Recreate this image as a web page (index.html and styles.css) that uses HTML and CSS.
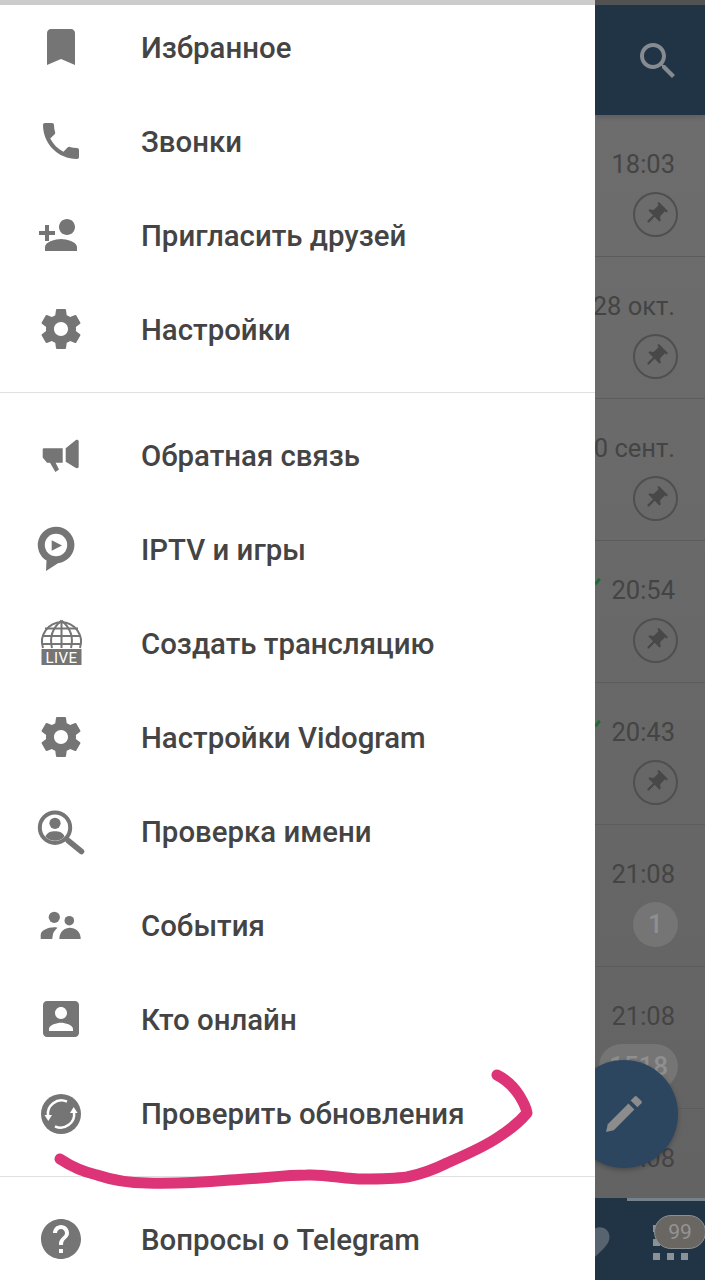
FILE: index.html
```html
<!DOCTYPE html>
<html lang="ru">
<head>
	<meta charset="UTF-8"/>
	<meta name="viewport" content="width=device-width, initial-scale=1.0" />
	<title>Vidogram menu</title>
	<link rel="stylesheet" href="styles.css">
</head>
<body>

<div id="container">

	<div id="drawer">
		<div class="strip"></div>

		<div class="group first">
			<div class="item">
				<svg class="icon" viewBox="0 0 24 24"><path d="M17 3H7c-1.1 0-1.99.9-1.99 2L5 21l7-3 7 3V5c0-1.1-.9-2-2-2z"/></svg>
				<span>Избранное</span>
			</div>
			<div class="item">
				<svg class="icon" viewBox="0 0 24 24"><path d="M6.62 10.79c1.44 2.83 3.76 5.14 6.59 6.59l2.2-2.2c.27-.27.67-.36 1.02-.24 1.12.37 2.33.57 3.57.57.55 0 1 .45 1 1V20c0 .55-.45 1-1 1-9.39 0-17-7.61-17-17 0-.55.45-1 1-1h3.5c.55 0 1 .45 1 1 0 1.25.2 2.45.57 3.57.11.35.03.74-.25 1.02l-2.2 2.2z"/></svg>
				<span>Звонки</span>
			</div>
			<div class="item">
				<svg class="icon" viewBox="0 0 24 24"><path d="M15 12c2.21 0 4-1.79 4-4s-1.79-4-4-4-4 1.79-4 4 1.79 4 4 4zm-9-2V7H4v3H1v2h3v3h2v-3h3v-2H6zm6 4c-2.67 0-8 1.34-8 4v2h16v-2c0-2.66-5.33-4-8-4z"/></svg>
				<span>Пригласить друзей</span>
			</div>
			<div class="item">
				<svg class="icon" viewBox="0 0 24 24"><path d="M19.43 12.98c.04-.32.07-.64.07-.98s-.03-.66-.07-.98l2.11-1.65c.19-.15.24-.42.12-.64l-2-3.46c-.12-.22-.39-.3-.61-.22l-2.49 1c-.52-.4-1.08-.73-1.69-.98l-.38-2.65C14.46 2.18 14.25 2 14 2h-4c-.25 0-.46.18-.49.42l-.38 2.65c-.61.25-1.17.59-1.69.98l-2.49-1c-.23-.09-.49 0-.61.22l-2 3.46c-.13.22-.07.49.12.64l2.11 1.65c-.04.32-.07.65-.07.98s.03.66.07.98l-2.11 1.65c-.19.15-.24.42-.12.64l2 3.46c.12.22.39.3.61.22l2.49-1c.52.4 1.08.73 1.69.98l.38 2.65c.03.24.24.42.49.42h4c.25 0 .46-.18.49-.42l.38-2.65c.61-.25 1.17-.59 1.69-.98l2.49 1c.23.09.49 0 .61-.22l2-3.46c.12-.22.07-.49-.12-.64l-2.11-1.65zM12 15.5c-1.93 0-3.5-1.57-3.5-3.5s1.57-3.5 3.5-3.5 3.5 1.57 3.5 3.5-1.57 3.5-3.5 3.5z"/></svg>
				<span>Настройки</span>
			</div>
		</div>

		<div class="group">
			<div class="item">
				<svg class="icon" viewBox="0 0 48 48"><path d="M6.5 17.3H25.7V31.7H18.6L22 38.6 18.4 41 13 31.7H10L5.7 26.5V18z"/><path d="M28.7 17.3L38.6 9.2c1.4-.8 3.1-.3 3.1 1.3V35.5c0 1.6-1.7 2.1-3.1 1.3L28.7 30.7z"/></svg>
				<span>Обратная связь</span>
			</div>
			<div class="item">
				<svg class="icon" viewBox="0 0 48 48"><path d="M19 1.7a18.3 18.3 0 0 1 2 36.5L9 46 9.5 35.6A18.3 18.3 0 0 1 19 1.7z"/><circle class="knock" cx="19" cy="20" r="11.2"/><path d="M14.7 15.2L25 20.5 14.7 25.8z"/></svg>
				<span>IPTV и игры</span>
			</div>
			<div class="item">
				<svg class="icon" viewBox="0 0 48 48">
					<g class="wire">
						<path d="M6 29A19.5 19.5 0 1 1 43 29"/>
						<path d="M24.5 1.5C13 11 13 21 15 29M24.5 1.5C36 11 36 21 34 29M24.5 1.5V29"/>
						<path d="M8 9.5H41M5 17H44M5 25H44"/>
					</g>
					<rect x="4.5" y="30" width="40" height="16"/>
					<text class="live" x="24.5" y="43.5" text-anchor="middle">LIVE</text>
				</svg>
				<span>Создать трансляцию</span>
			</div>
			<div class="item">
				<svg class="icon" viewBox="0 0 24 24"><path d="M19.43 12.98c.04-.32.07-.64.07-.98s-.03-.66-.07-.98l2.11-1.65c.19-.15.24-.42.12-.64l-2-3.46c-.12-.22-.39-.3-.61-.22l-2.49 1c-.52-.4-1.08-.73-1.69-.98l-.38-2.65C14.46 2.18 14.25 2 14 2h-4c-.25 0-.46.18-.49.42l-.38 2.65c-.61.25-1.17.59-1.69.98l-2.49-1c-.23-.09-.49 0-.61.22l-2 3.46c-.13.22-.07.49.12.64l2.11 1.65c-.04.32-.07.65-.07.98s.03.66.07.98l-2.11 1.65c-.19.15-.24.42-.12.64l2 3.46c.12.22.39.3.61.22l2.49-1c.52.4 1.08.73 1.69.98l.38 2.65c.03.24.24.42.49.42h4c.25 0 .46-.18.49-.42l.38-2.65c.61-.25 1.17-.59 1.69-.98l2.49 1c.23.09.49 0 .61-.22l2-3.46c.12-.22.07-.49-.12-.64l-2.11-1.65zM12 15.5c-1.93 0-3.5-1.57-3.5-3.5s1.57-3.5 3.5-3.5 3.5 1.57 3.5 3.5-1.57 3.5-3.5 3.5z"/></svg>
				<span>Настройки Vidogram</span>
			</div>
			<div class="item">
				<svg class="icon" viewBox="0 0 48 48">
					<circle class="ring" cx="18" cy="20.7" r="15.2"/>
					<path class="handle" d="M31 33.5L44.5 44.5"/>
					<circle cx="18" cy="16.3" r="5.6"/>
					<path d="M8.5 29.5C10 25.5 14 24.3 18 24.3s8 1.2 9.5 5.2C25 32.5 21.5 33.7 18 33.7s-7-1.2-9.5-4.2z"/>
				</svg>
				<span>Проверка имени</span>
			</div>
			<div class="item">
				<svg class="icon" viewBox="0 0 48 48">
					<circle cx="17.3" cy="16.3" r="5.6"/>
					<circle cx="32.3" cy="19.7" r="4.8"/>
					<path d="M3.7 38V34C3.7 29.5 11 26.3 17 26.3c1.3 0 2.5.1 3.5.4C18 29 16.5 31 16 33l-.8 5z"/>
					<path d="M22.3 38C22.3 30 28 26.7 33 26.7S43.7 30 43.7 38z"/>
				</svg>
				<span>События</span>
			</div>
			<div class="item">
				<svg class="icon" viewBox="0 0 24 24"><path d="M3 5v14c0 1.1.89 2 2 2h14c1.1 0 2-.9 2-2V5c0-1.1-.9-2-2-2H5c-1.11 0-2 .9-2 2zm12 4c0 1.66-1.34 3-3 3s-3-1.34-3-3 1.34-3 3-3 3 1.34 3 3zm-9 8c0-2 4-3.1 6-3.1s6 1.1 6 3.1v1H6v-1z"/></svg>
				<span>Кто онлайн</span>
			</div>
			<div class="item">
				<svg class="icon" viewBox="0 0 48 48">
					<circle cx="24" cy="25" r="20"/>
					<path class="arrow" d="M30 12.7A13.5 13.5 0 0 0 11 27"/>
					<path class="arrow" d="M18 37.3A13.5 13.5 0 0 0 37 23"/>
					<path class="knock" d="M7.5 26L15 26 11.300 32z"/>
					<path class="knock" d="M33 24L40.500 24 36.700 18z"/>
				</svg>
				<span>Проверить обновления</span>
			</div>
		</div>

		<div class="group last">
			<div class="item">
				<svg class="icon" viewBox="0 0 24 24"><path d="M12 2C6.48 2 2 6.48 2 12s4.48 10 10 10 10-4.48 10-10S17.52 2 12 2zm1 17h-2v-2h2v2zm2.07-7.75l-.9.92C13.45 12.9 13 13.5 13 15h-2v-.5c0-1.1.45-2.1 1.17-2.83l1.24-1.26c.37-.36.59-.86.59-1.41 0-1.1-.9-2-2-2s-2 .9-2 2H8c0-2.21 1.79-4 4-4s4 1.79 4 4c0 .88-.36 1.68-.93 2.25z"/></svg>
				<span>Вопросы о Telegram</span>
			</div>
		</div>
	</div>

	<div id="chats">
		<div class="head">
			<svg class="search" viewBox="0 0 24 24"><path d="M15.5 14h-.79l-.28-.27C15.41 12.59 16 11.11 16 9.5 16 5.91 13.09 3 9.5 3S3 5.91 3 9.5 5.91 16 9.5 16c1.61 0 3.09-.59 4.23-1.57l.27.28v.79l5 4.99L20.49 19l-4.99-5zm-6 0C7.01 14 5 11.99 5 9.5S7.01 5 9.5 5 14 7.01 14 9.5 11.99 14 9.5 14z"/></svg>
		</div>

		<div class="rows">
			<div class="row">
				<div class="time">18:03</div>
				<div class="pin"><svg viewBox="0 0 24 24"><path d="M16 9V4h1c.55 0 1-.45 1-1s-.45-1-1-1H7c-.55 0-1 .45-1 1s.45 1 1 1h1v5c0 1.66-1.34 3-3 3v2h5.97v7l1 1 1-1v-7H19v-2c-1.66 0-3-1.34-3-3z"/></svg></div>
			</div>
			<div class="row">
				<div class="time">28 окт.</div>
				<div class="pin"><svg viewBox="0 0 24 24"><path d="M16 9V4h1c.55 0 1-.45 1-1s-.45-1-1-1H7c-.55 0-1 .45-1 1s.45 1 1 1h1v5c0 1.66-1.34 3-3 3v2h5.97v7l1 1 1-1v-7H19v-2c-1.66 0-3-1.34-3-3z"/></svg></div>
			</div>
			<div class="row">
				<div class="time">30 сент.</div>
				<div class="pin"><svg viewBox="0 0 24 24"><path d="M16 9V4h1c.55 0 1-.45 1-1s-.45-1-1-1H7c-.55 0-1 .45-1 1s.45 1 1 1h1v5c0 1.66-1.34 3-3 3v2h5.97v7l1 1 1-1v-7H19v-2c-1.66 0-3-1.34-3-3z"/></svg></div>
			</div>
			<div class="row">
				<div class="time"><i class="tick"></i>20:54</div>
				<div class="pin"><svg viewBox="0 0 24 24"><path d="M16 9V4h1c.55 0 1-.45 1-1s-.45-1-1-1H7c-.55 0-1 .45-1 1s.45 1 1 1h1v5c0 1.66-1.34 3-3 3v2h5.97v7l1 1 1-1v-7H19v-2c-1.66 0-3-1.34-3-3z"/></svg></div>
			</div>
			<div class="row">
				<div class="time"><i class="tick"></i>20:43</div>
				<div class="pin"><svg viewBox="0 0 24 24"><path d="M16 9V4h1c.55 0 1-.45 1-1s-.45-1-1-1H7c-.55 0-1 .45-1 1s.45 1 1 1h1v5c0 1.66-1.34 3-3 3v2h5.97v7l1 1 1-1v-7H19v-2c-1.66 0-3-1.34-3-3z"/></svg></div>
			</div>
			<div class="row">
				<div class="time">21:08</div>
				<div class="count">1</div>
			</div>
			<div class="row">
				<div class="time">21:08</div>
				<div class="count wide">1518</div>
			</div>
			<div class="row end">
				<div class="time">21:08</div>
			</div>
		</div>

		<div class="tabs">
			<div class="indicator"></div>
			<div class="tabicons">
				<svg class="heart" viewBox="0 0 24 24"><path d="M12 21.35l-1.45-1.32C5.4 15.36 2 12.28 2 8.5 2 5.42 4.42 3 7.5 3c1.74 0 3.41.81 4.5 2.09C13.09 3.81 14.76 3 16.5 3 19.58 3 22 5.42 22 8.5c0 3.78-3.4 6.86-8.55 11.54L12 21.35z"/></svg>
				<div class="apps">
					<i></i><i></i><i></i><i></i><i></i><i></i><i></i><i></i><i></i>
					<div class="tabbadge">99</div>
				</div>
			</div>
		</div>

		<div class="fab">
			<svg viewBox="0 0 24 24"><path d="M3 21l.9-3.9L14.2 6.8l3 3L6.9 20.1z"/><path d="M15.3 5.2l2-2a.8.8 0 0 1 1.1 0l2.3 2.3a.8.8 0 0 1 0 1.1l-2 2z"/></svg>
		</div>
	</div>

	<!-- marker stroke drawn on top of the screenshot -->
	<svg id="ink" viewBox="0 0 705 1280"><path d="M60 1159C72 1167 84 1172 97 1175 112 1180 130 1183 147 1183 175 1184 205 1182 230 1180 258 1179 283 1175 307 1175 325 1174 345 1179 363 1179 378 1179 393 1179 407 1177 422 1174 435 1169 447 1163 465 1155 482 1148 497 1138 508 1131 518 1124 527 1113 526 1106 522 1100 519 1095 513 1086 507 1080 497 1075"/></svg>
</div>

</body>
</html>
```

FILE: styles.css
```css
html {
	font-family: Roboto, "Noto Sans", sans-serif;
}
body {
	margin: 0;
	padding: 0;
}
#container {
	position: relative;
	display: flex;
	width: 705px;
	height: 1280px;
	overflow: hidden;
}

/* left drawer */
#drawer {
	width: 595px;
	flex: none;
	background-color: #fff;
	position: relative;
}
.strip {
	height: 5px;
	background-color: #ccc;
}
.group {
	padding: 16px 0 15px;
	border-bottom: 1px solid #e0e0e0;
}
.group.first {
	margin-top: -4px;
	padding-top: 0;
}
.group.last {
	border-bottom: 0;
}
.item {
	display: flex;
	align-items: center;
	height: 94px;
	padding-left: 37px;
	font-size: 29.4px;
	font-weight: 500;
	color: #444;
	white-space: nowrap;
}
.icon {
	width: 48px;
	height: 48px;
	flex: none;
	margin: -2px 56px 0 0;
	fill: #757575;
}
.knock {
	fill: #fff;
}
.wire {
	fill: none;
	stroke: #757575;
	stroke-width: 2;
}
.live {
	font-family: Roboto, sans-serif;
	font-size: 15px;
	font-weight: 400;
	letter-spacing: .5px;
	fill: #fff;
}
.ring {
	fill: none;
	stroke: #757575;
	stroke-width: 4;
}
.handle {
	fill: none;
	stroke: #757575;
	stroke-width: 5.5;
	stroke-linecap: round;
}
.arrow {
	fill: none;
	stroke: #fff;
	stroke-width: 2.5;
}

/* dimmed chat list */
#chats {
	position: relative;
	flex: 1;
	min-width: 0;
	display: flex;
	flex-direction: column;
	overflow: hidden;
	background: linear-gradient(#6e6e6e, #626262);
}
.head {
	height: 110px;
	flex: none;
	border-top: 5px solid #525252;
	background-color: #213446;
	box-shadow: 0 3px 4px rgba(0 0 0 / .12);
	position: relative;
}
.search {
	display: block;
	width: 48px;
	height: 48px;
	margin: 32px 0 0 39px;
	fill: #858b90;
}
.rows {
	flex: 1;
}
.row {
	box-sizing: border-box;
	height: 142px;
	padding: 34px 27px 0 0;
	display: flex;
	flex-direction: column;
	align-items: flex-end;
	border-bottom: 1px solid #5c5c5c;
}
.row.end {
	height: 89px;
	border-bottom: 0;
}
.time {
	display: flex;
	align-items: center;
	height: 30px;
	margin-right: 3px;
	font-size: 25.5px;
	line-height: 30px;
	color: #444;
	white-space: nowrap;
}
.tick {
	width: 7px;
	height: 3px;
	margin: -17px 10px 0 0;
	background-color: #1f6a35;
	transform: rotate(-50deg);
}
.pin {
	box-sizing: border-box;
	width: 45px;
	height: 45px;
	margin-top: 13px;
	border: 2px solid #4f4f4f;
	border-radius: 50%;
	display: flex;
	align-items: center;
	justify-content: center;
}
.pin svg {
	width: 27px;
	height: 27px;
	fill: #484848;
	transform: rotate(45deg);
}
.count {
	box-sizing: border-box;
	min-width: 45px;
	height: 45px;
	margin-top: 13px;
	padding: 0 12px;
	border-radius: 23px;
	background-color: #757575;
	color: #8f8f8f;
	font-size: 26px;
	font-weight: 500;
	line-height: 45px;
	text-align: center;
}
.count.wide {
	width: 79px;
	padding: 0 9px;
}

/* bottom tabs */
.tabs {
	height: 83px;
	flex: none;
	background-color: #213446;
	position: relative;
}
.indicator {
	height: 3px;
	margin-left: 32px;
	background-color: #75828c;
}
.tabicons {
	display: flex;
	justify-content: space-between;
	align-items: flex-start;
	padding: 24px 17px 0 0;
}
.heart {
	width: 42px;
	height: 42px;
	margin: -3px 0 0 -24px;
	fill: #57646f;
}
.apps {
	position: relative;
	display: grid;
	grid-template-columns: repeat(3, 7px);
	grid-auto-rows: 7px;
	gap: 7px;
}
.apps i {
	background-color: #8b9196;
}
.tabbadge {
	position: absolute;
	left: 1px;
	top: -10px;
	box-sizing: border-box;
	width: 52px;
	height: 34px;
	border: 1px solid #8a8f92;
	border-radius: 17px;
	background-color: #6a6662;
	color: #949494;
	font-size: 21px;
	line-height: 32px;
	text-align: center;
}

/* floating button, partly under the drawer */
.fab {
	position: absolute;
	left: -25px;
	top: 1060px;
	width: 108px;
	height: 108px;
	border-radius: 50%;
	background-color: #2c4660;
	box-shadow: 0 2px 5px rgba(0 0 0 / .25);
	display: flex;
	align-items: center;
	justify-content: center;
}
.fab svg {
	width: 48px;
	height: 48px;
	fill: #8c8c8c;
}

#ink {
	position: absolute;
	left: 0;
	top: 0;
	width: 705px;
	height: 1280px;
	fill: none;
	stroke: #dd3377;
	stroke-width: 11;
	stroke-linecap: round;
	stroke-linejoin: round;
}
```
